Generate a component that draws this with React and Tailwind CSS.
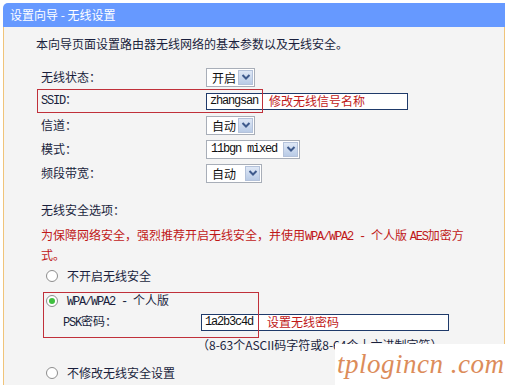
import React from "react";

const CJK = { fontFamily: '"Noto Sans CJK SC", "Noto Sans", sans-serif' };
const MONO = { fontFamily: '"Liberation Mono", "Noto Sans CJK SC", monospace' };

function Chevron() {
  return (
    <svg width="10" height="8" viewBox="0 0 10 8">
      <path d="M1.5 2 L5 5.5 L8.5 2" fill="none" stroke="#3e5a8c" strokeWidth="2" />
    </svg>
  );
}

function Select({ w, children, mono }) {
  return (
    <div className={`flex h-[19px] ${w} border border-[#a8aeb8] bg-white`}>
      <span
        className={`flex-1 pl-[4px] leading-[17px] text-[12px] text-[#111] ${mono ? "tracking-[-1.2px]" : "pl-[5px]"}`}
        style={mono ? MONO : CJK}
      >
        {children}
      </span>
      <span className="m-[1px] flex w-[15px] items-center justify-center border border-[#b4c2da] bg-gradient-to-b from-[#dfe8f6] to-[#b9cbe6]">
        <Chevron />
      </span>
    </div>
  );
}

function Radio({ checked }) {
  return (
    <span className="flex h-[12px] w-[12px] items-center justify-center rounded-full border border-[#8d8d8d] bg-white">
      {checked && <span className="h-[6px] w-[6px] rounded-full bg-[#3fbf3f]" />}
    </span>
  );
}

function Row({ label, mono, children }) {
  return (
    <div className="grid h-[24px] grid-cols-[165px_auto] items-center">
      <span
        className={`text-[12px] text-[#1a1f3d] ${mono ? "tracking-[-1.2px]" : ""}`}
        style={mono ? MONO : CJK}
      >
        {label}
      </span>
      <div className="flex items-center">{children}</div>
    </div>
  );
}

export default function App() {
  return (
    <div className="relative h-[385px] w-[510px] overflow-hidden bg-white" style={CJK}>
      <div className="ml-[3px] mt-[3px] w-[502px]">
        <div className="flex h-[24px] items-center rounded-tl-[5px] bg-[#6699ff] pl-[7px] text-[12px] text-white">
          设置向导 - 无线设置
        </div>
        <div className="h-[358px] border-l border-r border-[#f0c47a] bg-[#f4f4f4] pl-[32px]">
          <div className="pt-[9px] text-[12px] leading-[16px] text-[#1a1f3d]">
            本向导页面设置路由器无线网络的基本参数以及无线安全。
          </div>

          <div className="mt-[13px] pl-[5px]">
            <Row label="无线状态：">
              <Select w="w-[49px]">开启</Select>
            </Row>
            <Row label="SSID：" mono>
              <div className="flex h-[17px] w-[202px] items-center border border-[#1f3a6a] bg-white">
                <span className="w-[58px] pl-[3px] text-[12px] tracking-[-1.2px] text-[#111]" style={MONO}>
                  zhangsan
                </span>
                <span className="pl-[4px] text-[12px] text-[#c01818]">修改无线信号名称</span>
              </div>
            </Row>
            <Row label="信道：">
              <Select w="w-[49px]">自动</Select>
            </Row>
            <Row label="模式：">
              <Select w="w-[94px]" mono>11bgn mixed</Select>
            </Row>
            <Row label="频段带宽：">
              <Select w="w-[56px]">自动</Select>
            </Row>

            <div className="mt-[17px] text-[12px] leading-[16px] text-[#1a1f3d]">无线安全选项：</div>
            <div className="mt-[8px] text-[12px] leading-[17px] text-[#c01818]">
              为保障网络安全，强烈推荐开启无线安全，并使用
              <span className="tracking-[-1.2px]" style={MONO}>WPA/WPA2 - </span>个人版{" "}
              <span className="tracking-[-1.2px]" style={MONO}>AES</span>加密方
              <br />
              式。
            </div>

            <div className="ml-[5px] mt-[5px] flex h-[16px] items-center gap-[9px] text-[12px] text-[#1a1f3d]">
              <Radio />
              <span>不开启无线安全</span>
            </div>
            <div className="ml-[5px] mt-[9px] flex h-[16px] items-center gap-[9px] text-[12px] text-[#1a1f3d]">
              <Radio checked />
              <span>
                <span className="tracking-[-1.2px]" style={MONO}>WPA/WPA2 - </span>个人版
              </span>
            </div>
            <div className="mt-[3px] grid h-[18px] grid-cols-[138px_auto] items-center pl-[22px] text-[12px] text-[#1a1f3d]">
              <span>
                <span className="tracking-[-1.2px]" style={MONO}>PSK</span>密码：
              </span>
              <div className="flex h-[17px] w-[248px] items-center border border-[#1f3a6a] bg-white">
                <span className="w-[65px] pl-[3px] text-[12px] tracking-[-1.2px] text-[#111]" style={MONO}>
                  1a2b3c4d
                </span>
                <span className="text-[12px] text-[#c01818]">设置无线密码</span>
              </div>
            </div>
            <div className="mt-[7px] whitespace-nowrap pl-[156px] text-[12px] leading-[16px] text-[#1a1f3d]">
              （8-63个ASCII码字符或8-64个十六进制字符）
            </div>
            <div className="ml-[5px] mt-[12px] flex h-[16px] items-center gap-[9px] text-[12px] text-[#1a1f3d]">
              <Radio />
              <span>不修改无线安全设置</span>
            </div>
          </div>
        </div>
      </div>

      {/* annotation boxes */}
      <div className="pointer-events-none absolute left-[37px] top-[89px] h-[24px] w-[226px] border border-[#c0303a]" />
      <div className="pointer-events-none absolute left-[43px] top-[292px] h-[46px] w-[216px] border border-[#c0303a]" />

      {/* watermark */}
      <div className="absolute bottom-0 left-[335px] right-0 top-[344px] flex items-center bg-white pl-[2px] pb-[2px]">
        <span
          className="whitespace-nowrap text-[27px] italic leading-[30px] tracking-[0.5px] text-[#dc8c5a]"
          style={{ fontFamily: '"Liberation Serif", "DejaVu Serif", serif' }}
        >
          tplogincn .com
        </span>
      </div>
    </div>
  );
}
